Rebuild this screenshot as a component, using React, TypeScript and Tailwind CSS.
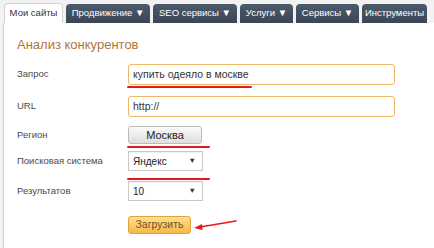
import React from 'react';

const TABS = [
  { t: 'Продвижение ▼', w: 84 },
  { t: 'SEO сервисы ▼', w: 84 },
  { t: 'Услуги ▼', w: 53 },
  { t: 'Сервисы ▼', w: 63 },
  { t: 'Инструменты', w: 65 },
];

function Row({ label, children }: { label: string; children: React.ReactNode }) {
  return (
    <div className="flex items-center">
      <div className="w-[111px] shrink-0 text-[9.5px] text-[#4a4a4a]">{label}</div>
      <div className="relative flex items-center">{children}</div>
    </div>
  );
}

function Select({ value }: { value: string }) {
  return (
    <div className="flex h-[20px] w-[75px] items-center justify-between border border-[#c9c9c9] bg-white pl-[4px] pr-[6px] text-[10px] text-[#222] shadow-[inset_0_1px_1px_rgba(0,0,0,0.06)]">
      <span>{value}</span>
      <span className="text-[7.5px] text-[#333]">▼</span>
    </div>
  );
}

export default function App() {
  return (
    <div className="h-[248px] w-[434px] overflow-hidden bg-[#f2f2f2] font-['Liberation_Sans',Arial,sans-serif]">
      {/* tabs */}
      <div className="flex h-[23px] items-end gap-[3px] pl-[4px]">
        <div className="flex h-[20px] w-[59px] shrink-0 items-center justify-center whitespace-nowrap rounded-t-[4px] border border-b-0 border-[#d4d4d4] bg-white text-[9.5px] text-[#333]">
          Мои сайты
        </div>
        {TABS.map((tab) => (
          <div
            key={tab.t}
            className="flex h-[19px] shrink-0 items-center justify-center whitespace-nowrap rounded-t-[4px] bg-gradient-to-b from-[#4d5a6b] to-[#3a4656] text-[9.5px] text-white"
            style={{ width: tab.w }}
          >
            {tab.t}
          </div>
        ))}
      </div>

      {/* panel */}
      <div className="ml-[3px] h-[225px] border-l border-[#cfcfcf] bg-white pl-[13px] pt-[13px]">
        <h1 className="text-[13px] leading-[17px] text-[#b3743d]">Анализ конкурентов</h1>

        <div className="mt-[11px] flex flex-col">
          <Row label="Запрос">
            <div className="flex h-[21px] w-[267px] items-center rounded-[3px] border border-[#f0b66a] bg-white pl-[4px] text-[10.5px] text-[#333]">
              купить одеяло в москве
            </div>
            <div className="absolute bottom-[-3px] left-[-1px] h-[2px] w-[125px] rounded-full bg-[#e01b1b]" />
          </Row>

          <div className="mt-[11px]">
            <Row label="URL">
              <div className="flex h-[21px] w-[267px] items-center rounded-[3px] border border-[#f0b66a] bg-white pl-[4px] text-[10.5px] text-[#333]">
                http://
              </div>
            </Row>
          </div>

          <div className="mt-[9px]">
            <Row label="Регион">
              <div className="flex h-[18px] w-[74px] items-center justify-center rounded-[3px] border border-[#bdbdbd] bg-gradient-to-b from-[#fafafa] to-[#dedede] text-[11px] text-[#222]">
                Москва
              </div>
              <div className="absolute bottom-[-4px] left-[-1px] h-[2px] w-[83px] rounded-full bg-[#e01b1b]" />
            </Row>
          </div>

          <div className="mt-[7px]">
            <Row label="Поисковая система">
              <Select value="Яндекс" />
              <div className="absolute bottom-[-9px] left-[-1px] h-[2px] w-[83px] rounded-full bg-[#e01b1b]" />
            </Row>
          </div>

          <div className="mt-[10px]">
            <Row label="Результатов">
              <Select value="10" />
            </Row>
          </div>

          <div className="mt-[15px] flex items-center pl-[111px]">
            <div className="flex h-[18px] w-[63px] items-center justify-center rounded-[3px] border border-[#e2a33c] bg-gradient-to-b from-[#fde08a] to-[#f6b84a] text-[10.5px] text-[#7a4e1c]">
              Загрузить
            </div>
            <svg width="46" height="14" viewBox="0 0 46 14" className="ml-[1px] mt-[2px]">
              <path d="M44 2 L8 8" stroke="#e01b1b" strokeWidth="1.6" fill="none" strokeLinecap="round" />
              <path d="M2 9 L10 5 L10.5 11 Z" fill="#e01b1b" />
            </svg>
          </div>
        </div>
      </div>
    </div>
  );
}
